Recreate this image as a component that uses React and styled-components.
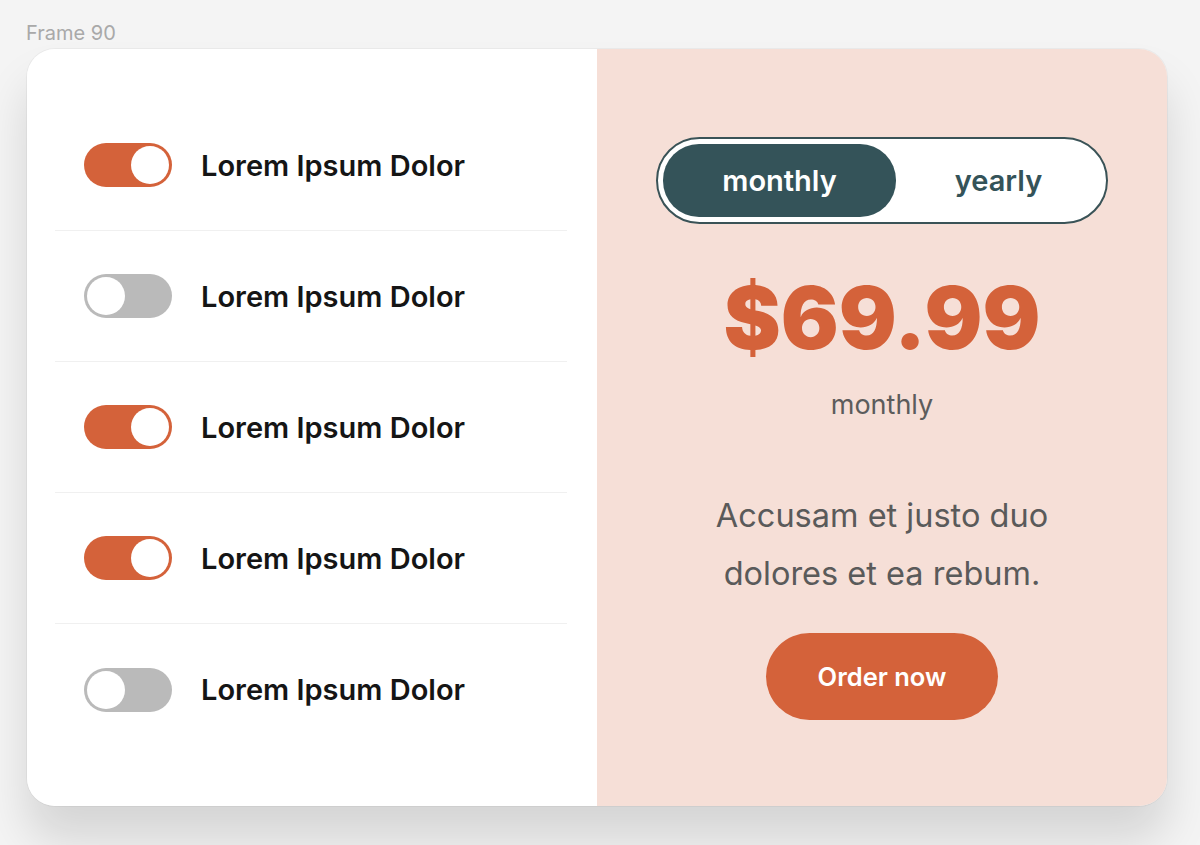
import React, { useState } from "react";
import styled, { createGlobalStyle } from "styled-components";

const GlobalStyle = createGlobalStyle`
  html, body {
    margin: 0;
    padding: 0;
    background: #f4f4f4;
    font-family: Inter, "Noto Sans", sans-serif;
  }
`;

const Page = styled.div`
  width: 1200px;
  height: 845px;
  padding: 22px 0 0 27px;
  box-sizing: border-box;
  overflow: hidden;
`;

const FrameLabel = styled.div`
  font-size: 20px;
  color: #a9a9a9;
  line-height: 22px;
  height: 27px;
  margin-left: -1px;
`;

const Card = styled.div`
  width: 1140px;
  height: 757px;
  display: grid;
  grid-template-columns: 570px 570px;
  border-radius: 28px;
  overflow: hidden;
  box-shadow: 0 34px 46px rgba(0, 0, 0, 0.13), 0 0 0 1px rgba(0, 0, 0, 0.04);
`;

const LeftPanel = styled.div`
  background: #fff;
  padding: 51px 0 0 28px;
  display: flex;
  flex-direction: column;
`;

const Row = styled.div`
  width: 512px;
  height: 131px;
  display: flex;
  align-items: center;
  gap: 29px;
  padding-left: 29px;
  box-sizing: border-box;
  border-bottom: ${(p) => (p.$last ? "none" : "1.5px solid #f0f0f0")};
`;

const Switch = styled.button`
  width: 88px;
  height: 44px;
  border-radius: 22px;
  border: none;
  padding: 3px;
  display: flex;
  justify-content: ${(p) => (p.$on ? "flex-end" : "flex-start")};
  background: ${(p) => (p.$on ? "#d4623a" : "#bababa")};
  cursor: pointer;
  box-sizing: border-box;
`;

const Knob = styled.span`
  width: 38px;
  height: 38px;
  border-radius: 50%;
  background: #fff;
`;

const RowLabel = styled.span`
  font-size: 29px;
  font-weight: 600;
  color: #151515;
`;

const RightPanel = styled.div`
  background: #f6dfd7;
  display: flex;
  flex-direction: column;
  align-items: center;
  padding-top: 88px;
`;

const Segmented = styled.div`
  width: 452px;
  height: 87px;
  border: 2px solid #3a5357;
  border-radius: 44px;
  background: #fff;
  padding: 5px;
  box-sizing: border-box;
  display: grid;
  grid-template-columns: 233px 1fr;
`;

const Segment = styled.button`
  border: none;
  border-radius: 36px;
  font-family: inherit;
  font-size: 29px;
  font-weight: 600;
  cursor: pointer;
  background: ${(p) => (p.$active ? "#345359" : "transparent")};
  color: ${(p) => (p.$active ? "#fff" : "#345359")};
`;

const Price = styled.div`
  margin-top: 39px;
  font-size: 86px;
  font-weight: 900;
  color: #d4623a;
  line-height: 110px;
`;

const Period = styled.div`
  margin-top: 15px;
  font-size: 27px;
  color: #5c5c5c;
  line-height: 34px;
`;

const Description = styled.p`
  margin: 65px 0 0;
  font-size: 32.5px;
  line-height: 58px;
  color: #5a5a5a;
  text-align: center;
  width: 380px;
`;

const OrderButton = styled.button`
  margin-top: 30px;
  width: 232px;
  height: 87px;
  border: none;
  border-radius: 44px;
  background: #d4623a;
  color: #fff;
  font-family: inherit;
  font-size: 25.5px;
  font-weight: 600;
  cursor: pointer;
`;

const initial = [true, false, true, true, false];

export default function App() {
  const [toggles, setToggles] = useState(initial);
  const [plan, setPlan] = useState("monthly");

  const flip = (i) =>
    setToggles((t) => t.map((v, j) => (j === i ? !v : v)));

  return (
    <Page>
      <GlobalStyle />
      <FrameLabel>Frame 90</FrameLabel>
      <Card>
        <LeftPanel>
          {toggles.map((on, i) => (
            <Row key={i} $last={i === toggles.length - 1}>
              <Switch $on={on} onClick={() => flip(i)}>
                <Knob />
              </Switch>
              <RowLabel>Lorem Ipsum Dolor</RowLabel>
            </Row>
          ))}
        </LeftPanel>
        <RightPanel>
          <Segmented>
            <Segment
              $active={plan === "monthly"}
              onClick={() => setPlan("monthly")}
            >
              monthly
            </Segment>
            <Segment
              $active={plan === "yearly"}
              onClick={() => setPlan("yearly")}
            >
              yearly
            </Segment>
          </Segmented>
          <Price>{plan === "monthly" ? "$69.99" : "$699.99"}</Price>
          <Period>{plan}</Period>
          <Description>Accusam et justo duo dolores et ea rebum.</Description>
          <OrderButton>Order now</OrderButton>
        </RightPanel>
      </Card>
    </Page>
  );
}
